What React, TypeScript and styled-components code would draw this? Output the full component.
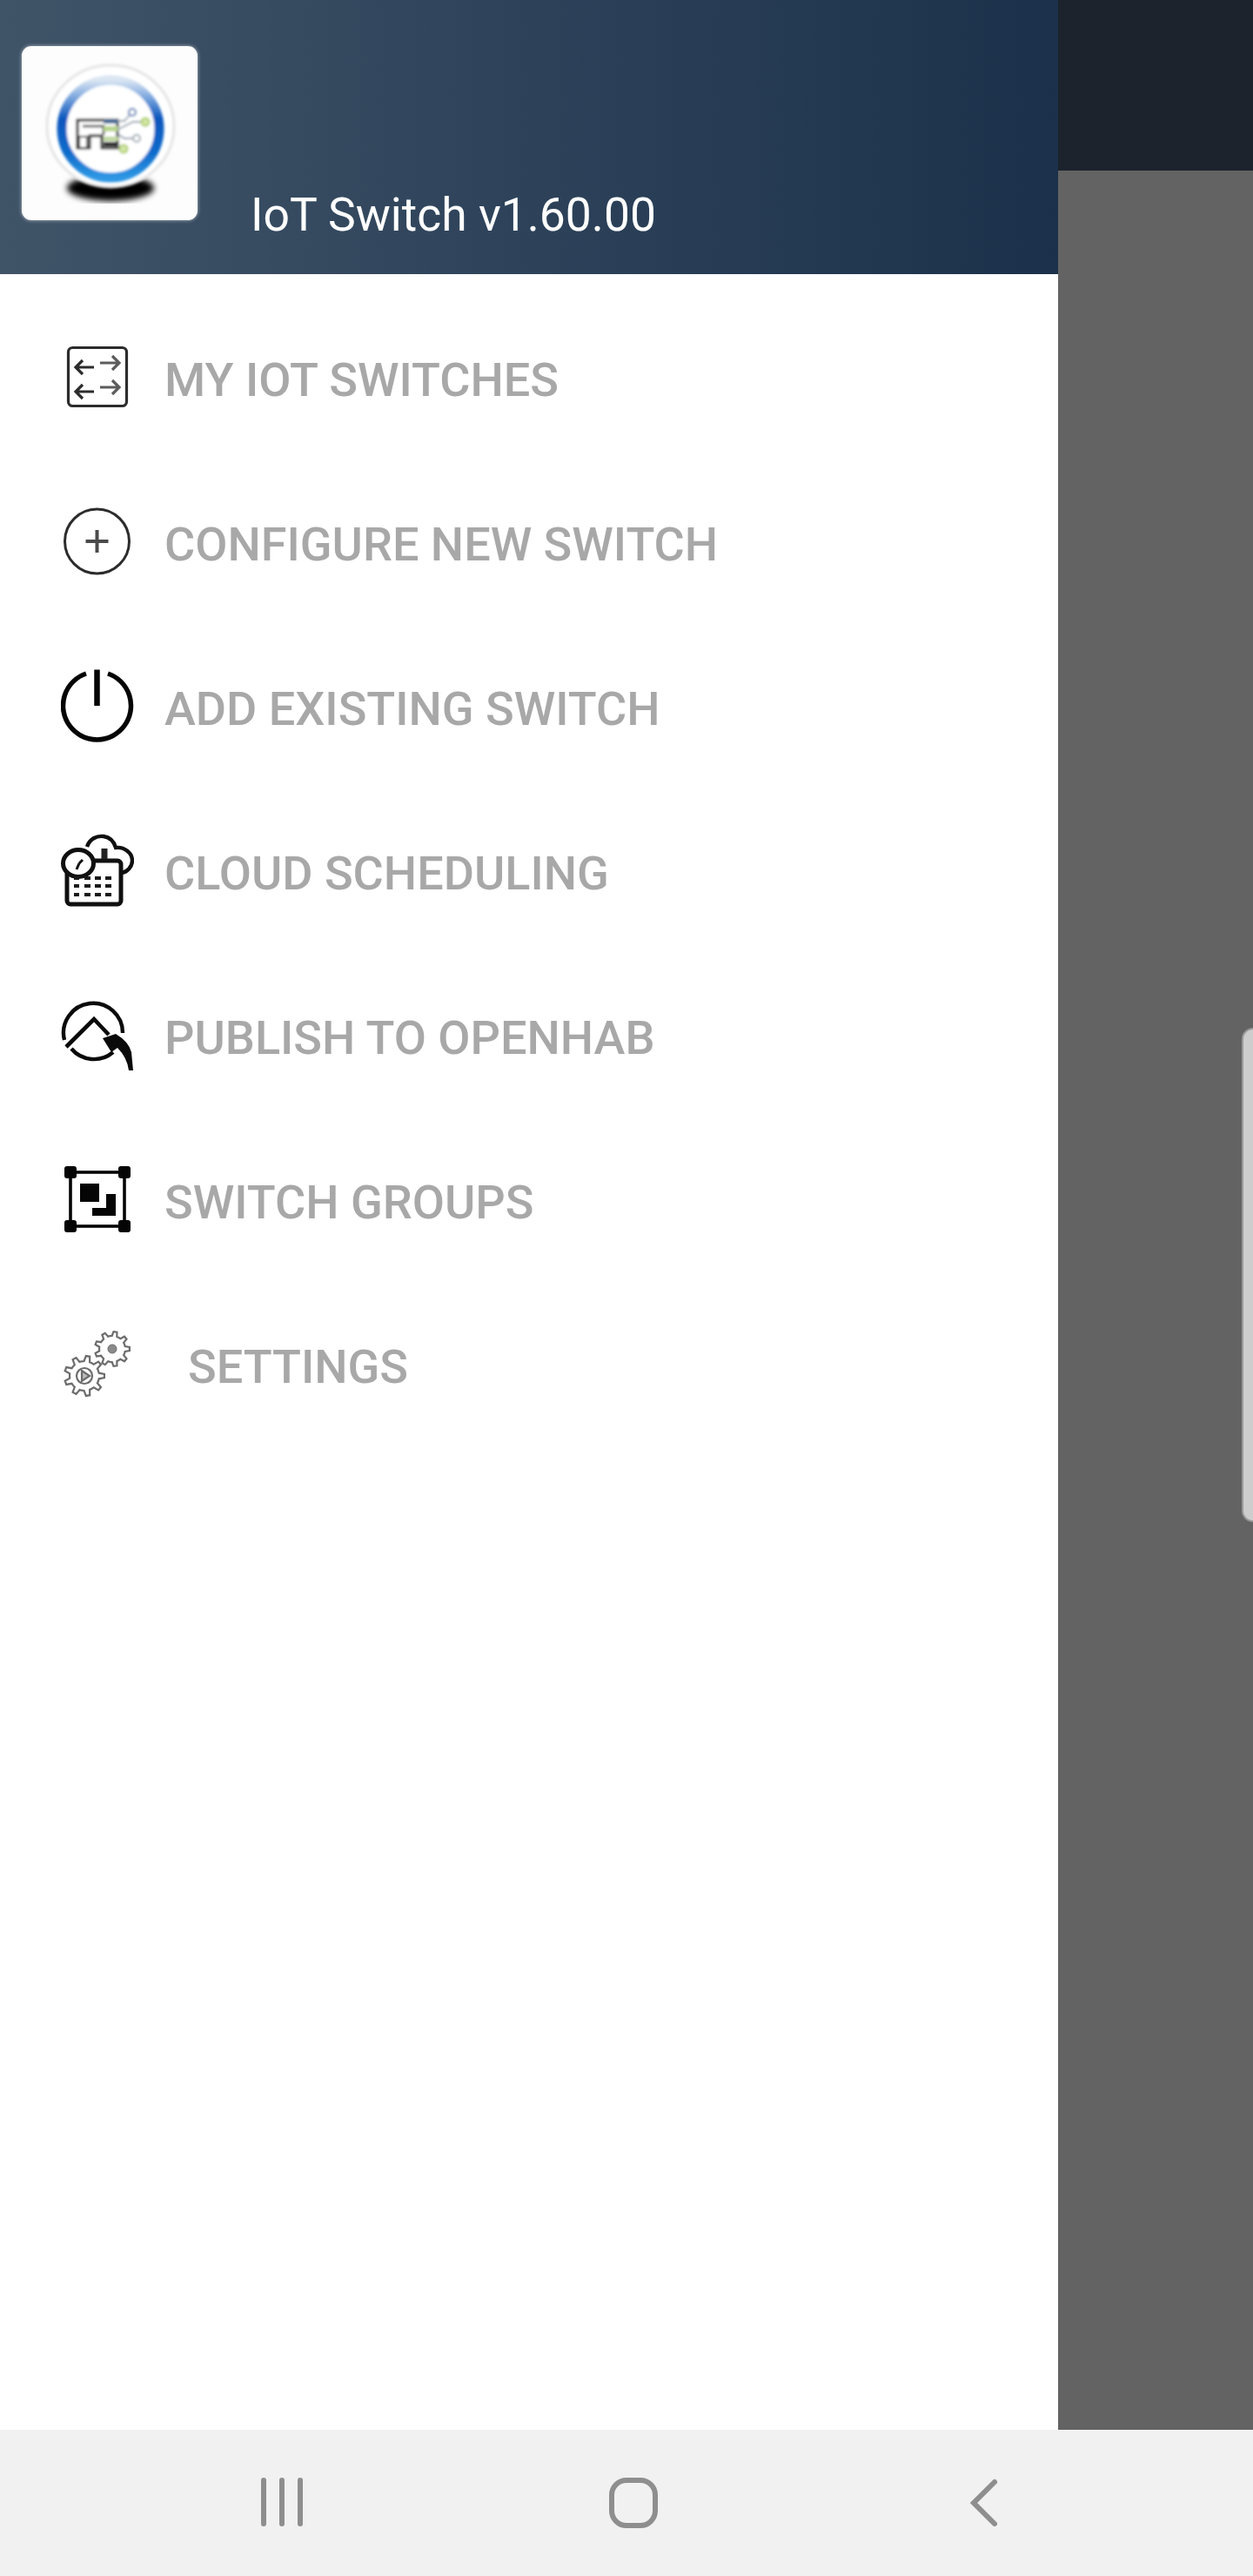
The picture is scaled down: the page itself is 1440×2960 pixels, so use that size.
import React from 'react';
import styled, { createGlobalStyle } from 'styled-components';

const GlobalStyle = createGlobalStyle`
  html, body {
    margin: 0;
    padding: 0;
    background: #f1f1f1;
  }
  * {
    box-sizing: border-box;
  }
`;

const Screen = styled.div`
  width: 1440px;
  height: 2960px;
  display: flex;
  flex-direction: column;
  overflow: hidden;
  font-family: Roboto, 'Liberation Sans', sans-serif;
`;

const Content = styled.div`
  flex: 1;
  display: flex;
  min-height: 0;
`;

const Drawer = styled.aside`
  width: 1216px;
  background: #fff;
  display: flex;
  flex-direction: column;
`;

const DrawerHeader = styled.header`
  height: 315px;
  padding: 53px 0 0 25px;
  display: flex;
  align-items: flex-start;
  background: linear-gradient(90deg, #405468 0%, #1b314b 100%);
`;

const LogoCard = styled.div`
  width: 202px;
  height: 200px;
  border-radius: 11px;
  background: #fdfdfd;
  box-shadow: 0 0 4px rgba(255, 255, 255, 0.6);
  overflow: hidden;
`;

const Title = styled.div`
  margin: 162px 0 0 61px;
  font-size: 53.4px;
  line-height: 64px;
  font-weight: 400;
  color: #fff;
  white-space: nowrap;
`;

const Menu = styled.nav`
  padding-top: 23px;
  display: flex;
  flex-direction: column;
`;

const MenuRow = styled.div`
  height: 189px;
  padding-left: 70px;
  display: flex;
  align-items: center;
`;

const MenuIcon = styled.svg`
  width: 84px;
  height: 84px;
  flex: none;
  display: block;
  filter: blur(0.6px);
`;

const MenuLabel = styled.span<{ $indent?: boolean }>`
  margin-left: ${(p) => (p.$indent ? 62 : 35)}px;
  padding-top: 7px;
  font-size: 54px;
  font-weight: 500;
  color: #a8a8a8;
  white-space: nowrap;
`;

const Backdrop = styled.div`
  flex: 1;
  position: relative;
  display: flex;
  flex-direction: column;
  background: #636363;
`;

const TopBar = styled.div`
  height: 196px;
  background: #1c232c;
`;

const EdgeHandle = styled.div`
  position: absolute;
  top: 1181px;
  right: 0;
  width: 13px;
  height: 568px;
  background: #cdcdcd;
  border-left: 2px solid #979797;
  border-top: 2px solid #979797;
  border-bottom: 2px solid #979797;
  border-radius: 16px 0 0 16px;
`;

const NavBar = styled.footer`
  height: 168px;
  padding-left: 122px;
  background: #f1f1f1;
  display: grid;
  grid-template-columns: repeat(3, 404px);
  align-items: center;
  justify-items: center;
`;

const NavIcon = styled.svg`
  width: 64px;
  height: 64px;
  display: block;
`;

const gearPath = (cx: number, cy: number, outer: number, inner: number, teeth: number) => {
  const pts: string[] = [];
  const step = (Math.PI * 2) / teeth;
  for (let i = 0; i < teeth; i++) {
    const a = i * step;
    const corners: [number, number][] = [
      [inner, a - step * 0.5],
      [inner, a - step * 0.28],
      [outer, a - step * 0.14],
      [outer, a + step * 0.14],
      [inner, a + step * 0.28],
    ];
    corners.forEach(([r, t]) => {
      pts.push(`${(cx + r * Math.cos(t)).toFixed(1)} ${(cy + r * Math.sin(t)).toFixed(1)}`);
    });
  }
  return `M${pts.join('L')}Z`;
};

const SwitchesIcon = () => (
  <MenuIcon viewBox="0 0 84 84" fill="none" stroke="#2c2c2c" strokeWidth="3.2">
    <rect x="8.5" y="8.5" width="67" height="67" rx="5" />
    <path d="M38 31H17M25 23l-8 8 8 8" />
    <path d="M45 26h22M59 18l8 8-8 8" stroke="#5c5c5c" />
    <path d="M38 59H17M25 51l-8 8 8 8" />
    <path d="M45 54h22M59 46l8 8-8 8" stroke="#5c5c5c" />
  </MenuIcon>
);

const AddIcon = () => (
  <MenuIcon viewBox="0 0 84 84" fill="none" stroke="#2c2c2c">
    <circle cx="41.5" cy="42" r="37" strokeWidth="3" />
    <path d="M28.5 42h26M41.5 29v26" strokeWidth="4" stroke="#4a4a4a" />
  </MenuIcon>
);

const PowerIcon = () => (
  <MenuIcon viewBox="0 0 84 84" fill="none" stroke="#050505" strokeWidth="5.5">
    <path d="M29 5A39 39 0 1 0 54 5" />
    <path d="M41.5 0.5V42" strokeWidth="6.5" />
  </MenuIcon>
);

const ScheduleIcon = () => (
  <MenuIcon viewBox="0 0 84 84" fill="none" stroke="#101010" strokeWidth="4.4">
    <path d="M30 15C33 6 41 2 49 3c7 1 12 6 14 13 10-1 19 6 19 15 0 7-6 13-12 14" />
    <rect x="7" y="31" width="62" height="50" rx="4" strokeWidth="5" />
    <ellipse cx="20" cy="34" rx="17.5" ry="15.5" fill="#fff" strokeWidth="5" />
    <path d="M21 34l-3 7M21 34l4-4" strokeWidth="3" />
    <path d="M50 17v12" strokeWidth="7" stroke="#222" />
    <path
      d="M15 51h6M27 51h7M39 51h7M51 51h7M15 60h6M27 60h7M39 60h7M51 60h7M15 70h6M27 70h7M39 70h7M51 70h7"
      strokeWidth="4"
      stroke="#1a1a1a"
    />
  </MenuIcon>
);

const PublishIcon = () => (
  <MenuIcon viewBox="0 0 84 84" fill="none" stroke="#0a0a0a" strokeWidth="4.4">
    <path d="M4 48A34 34 0 1 1 71 40" />
    <path d="M12 58A34 34 0 0 0 60 62" />
    <path d="M6 56L38 24l17 18" strokeWidth="4.6" />
    <path d="M48 46L63 41Q78 50 81 62L83 83 78 83Q76 68 65 57L58 62Z" fill="#0a0a0a" stroke="none" />
  </MenuIcon>
);

const GroupsIcon = () => (
  <MenuIcon viewBox="0 0 84 84" fill="none" stroke="#050505" strokeWidth="3.6">
    <rect x="11" y="11" width="62" height="62" />
    <g fill="#050505" stroke="none">
      <rect x="4" y="4" width="14" height="14" rx="3" />
      <rect x="66" y="4" width="14" height="14" rx="3" />
      <rect x="4" y="66" width="14" height="14" rx="3" />
      <rect x="66" y="66" width="14" height="14" rx="3" />
      <rect x="22" y="24" width="22" height="21" />
      <path d="M52 36h11v25H36v-9h16z" />
    </g>
  </MenuIcon>
);

const SettingsIcon = () => (
  <MenuIcon viewBox="0 0 84 84" fill="#fff" stroke="#6c6c6c" strokeWidth="2.2">
    <path d={gearPath(27, 56, 23, 17, 9)} />
    <path d="M24 50l9 6-9 6z" fill="#bbb" />
    <circle cx="27" cy="56" r="9" fill="none" />
    <path d={gearPath(59, 25, 20, 15, 9)} />
    <circle cx="59" cy="25" r="5" fill="#8a8a8a" strokeWidth="1" />
  </MenuIcon>
);

const Logo = () => (
  <svg width="202" height="200" viewBox="0 0 202 200">
    <defs>
      <linearGradient id="ring" x1="0" y1="0" x2="0" y2="1">
        <stop offset="0" stopColor="#dbe6f3" />
        <stop offset="0.18" stopColor="#7ba6dd" />
        <stop offset="0.4" stopColor="#0a55bd" />
        <stop offset="0.75" stopColor="#0f6ccb" />
        <stop offset="1" stopColor="#2e97e4" />
      </linearGradient>
      <filter id="soft">
        <feGaussianBlur stdDeviation="1.5" />
      </filter>
      <filter id="softer">
        <feGaussianBlur stdDeviation="3.5" />
      </filter>
    </defs>
    <ellipse cx="102" cy="163" rx="50" ry="15" fill="#000" filter="url(#softer)" />
    <ellipse cx="102" cy="92" rx="73" ry="70" fill="#fff" stroke="#e4e4e4" strokeWidth="3" filter="url(#soft)" />
    <g filter="url(#soft)">
      <circle cx="102" cy="95" r="56" fill="#fff" stroke="url(#ring)" strokeWidth="11" />
      <path d="M64 85h46v32H92V103H78v14H64z" fill="none" stroke="#222" strokeWidth="3" />
      <path d="M70 92h24v10" fill="none" stroke="#333" strokeWidth="2.5" />
      <rect x="66" y="104" width="9" height="13" fill="#fff" stroke="#222" strokeWidth="2" />
      <rect x="94" y="84" width="17" height="5" fill="#3f6a96" />
      <rect x="94" y="92" width="17" height="6" fill="#b6d38a" />
      <rect x="94" y="104" width="17" height="5" fill="#bcd79a" />
      <rect x="94" y="110" width="17" height="5" fill="#151515" />
      <path d="M110 86l8 0 7-8M110 96l18-9h12M110 101l8 5h10M110 114l5 3" fill="none" stroke="#8a9aa8" strokeWidth="1.8" />
      <circle cx="127" cy="76" r="4" fill="#fff" stroke="#3d6fb0" strokeWidth="2" />
      <circle cx="142" cy="87" r="4.5" fill="#d3e6a8" stroke="#a8cb60" strokeWidth="2" />
      <circle cx="132" cy="106" r="4" fill="#fff" stroke="#98a4ad" strokeWidth="2" />
      <circle cx="117" cy="118" r="4.5" fill="#d3e6a8" stroke="#a8cb60" strokeWidth="2" />
    </g>
  </svg>
);

const items = [
  { label: 'MY IOT SWITCHES', icon: <SwitchesIcon /> },
  { label: 'CONFIGURE NEW SWITCH', icon: <AddIcon /> },
  { label: 'ADD EXISTING SWITCH', icon: <PowerIcon /> },
  { label: 'CLOUD SCHEDULING', icon: <ScheduleIcon /> },
  { label: 'PUBLISH TO OPENHAB', icon: <PublishIcon /> },
  { label: 'SWITCH GROUPS', icon: <GroupsIcon /> },
  { label: 'SETTINGS', icon: <SettingsIcon />, indent: true },
];

export default function App() {
  return (
    <Screen>
      <GlobalStyle />
      <Content>
        <Drawer>
          <DrawerHeader>
            <LogoCard>
              <Logo />
            </LogoCard>
            <Title>IoT Switch v1.60.00</Title>
          </DrawerHeader>
          <Menu>
            {items.map((item) => (
              <MenuRow key={item.label}>
                {item.icon}
                <MenuLabel $indent={item.indent}>{item.label}</MenuLabel>
              </MenuRow>
            ))}
          </Menu>
        </Drawer>
        <Backdrop>
          <TopBar />
          <EdgeHandle />
        </Backdrop>
      </Content>
      <NavBar>
        <NavIcon viewBox="0 0 64 64" fill="none" stroke="#8e8e8e" strokeWidth="6" strokeLinecap="round">
          <path d="M11 6v50M32 6v50M53 6v50" />
        </NavIcon>
        <NavIcon viewBox="0 0 64 64" fill="none" stroke="#8e8e8e" strokeWidth="6">
          <rect x="7" y="6" width="50" height="52" rx="17" />
        </NavIcon>
        <NavIcon viewBox="0 0 64 64" fill="none" stroke="#8e8e8e" strokeWidth="6" strokeLinecap="round">
          <path d="M43 8L19 32l0 0 24 24" />
        </NavIcon>
      </NavBar>
    </Screen>
  );
}
